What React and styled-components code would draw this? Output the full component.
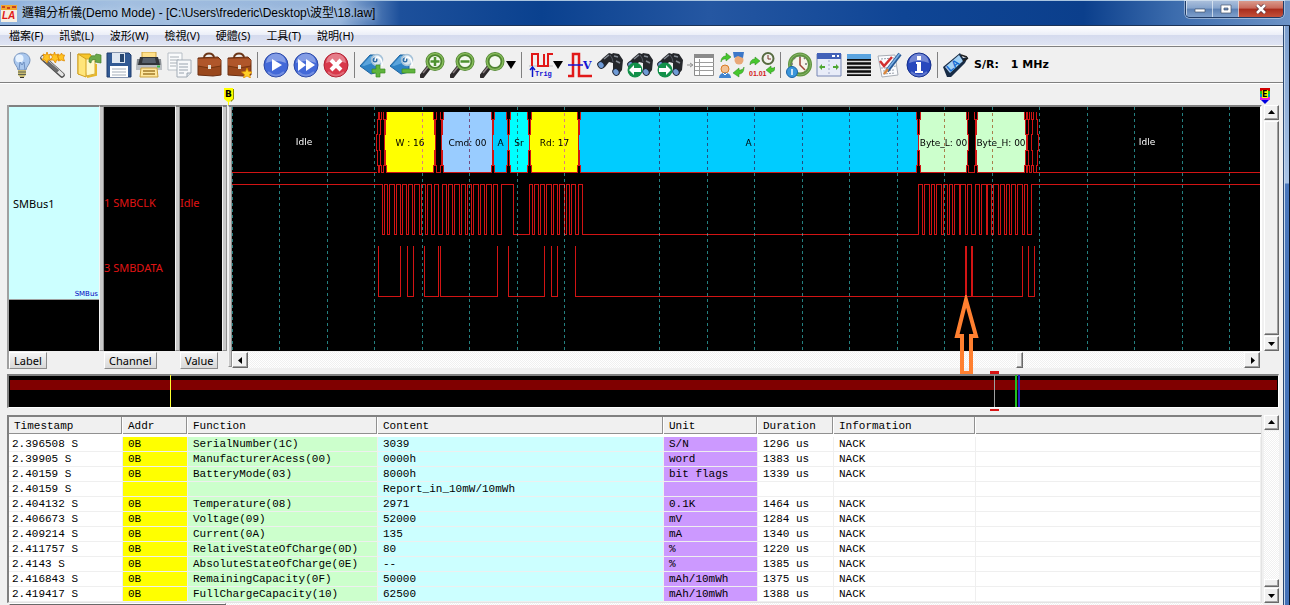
import React from "react";
import styled, { createGlobalStyle } from "styled-components";

const GlobalStyle = createGlobalStyle`
  * {
    box-sizing: border-box;
  }
  body {
    margin: 0;
    background: #f0f0f0;
    color: #000;
    font-family: "Noto Sans", "Noto Sans CJK TC", sans-serif;
    font-size: 11px;
  }
  button {
    font: inherit;
    color: inherit;
    padding: 0;
    border: 0;
    background: none;
  }
`;

/* ---------- window frame ---------- */

const Window = styled.div`
  display: flex;
  flex-direction: column;
  height: 100vh;
  min-height: 605px;
  overflow: hidden;
`;
const TitleBar = styled.header`
  display: flex;
  height: 26px;
  flex: none;
  padding: 0 6px 0 1px;
  border-top: 1px solid #a8c4e0;
  border-bottom: 1px solid #1c3357;
  background: linear-gradient(
    90deg,
    #8fb2dc 0,
    #a3bfe0 120px,
    #94b3da 340px,
    #1d509b 400px,
    #0a418f 42%,
    #2557a2 55%,
    #0f4595 70%,
    #0b3f8c 84%,
    #3c6cad 91%,
    #6d93c6 100%
  );
`;
const Title = styled.h1`
  flex: 1;
  margin: 0 0 0 5px;
  font-family: "Liberation Sans", "Noto Sans CJK TC", sans-serif;
  font-size: 12px;
  font-weight: 400;
  line-height: 24px;
  white-space: nowrap;
  text-shadow: 0 0 6px #d4e2f2;
`;
const AppLogo = styled.svg`
  width: 16px;
  height: 17px;
  margin-top: 4px;
`;
const WindowControls = styled.div`
  display: flex;
  width: 99px;
  height: 17px;
  border: 1px solid #1f3b66;
  border-top: 0;
  border-radius: 0 0 5px 5px;
  box-shadow: 0 0 0 1px rgba(255, 255, 255, 0.4);
  overflow: hidden;
`;
const WindowButton = styled.button`
  display: flex;
  align-items: center;
  justify-content: center;
  flex: ${(props) => (props.$close ? 45 : 26)};
  border-left: 1px solid rgba(235, 242, 250, 0.7);
  background: ${(props) =>
    props.$close
      ? "linear-gradient(#d99a8c 0, #c9695a 45%, #a82c1c 50%, #c4503a 100%)"
      : "linear-gradient(#a9bedb 0, #86a4cc 45%, #5b80b3 50%, #7fa0cc 100%)"};
`;
const Frame = styled.div`
  display: flex;
  flex: 1;
  min-height: 0;
`;
const FrameEdge = styled.div`
  flex: none;
  width: 7px;
  border-left: 1px solid #27456f;
  border-right: 1px solid #0a1526;
  box-shadow: inset 1px 0 #c5d6ea;
  background: linear-gradient(#7d9fce 0, #a9c4e6 157px, #4a78bd 158px, #4472b8 100%);
`;
const Main = styled.main`
  display: flex;
  flex-direction: column;
  flex: 1;
  min-width: 0;
`;

/* ---------- menu + toolbar ---------- */

const MenuBar = styled.nav`
  display: flex;
  flex: none;
  height: 20px;
  padding-left: 1px;
  border-bottom: 1px solid #f8f8f8;
  background: linear-gradient(#fff 0, #eceff8 45%, #d5dbee 50%, #dfe4f3 100%);
`;
const MenuItem = styled.button`
  padding: 0 8px;
  line-height: 17px;
`;
const ToolBar = styled.div`
  display: flex;
  align-items: center;
  flex: none;
  height: 37px;
  padding-left: 7px;
  border-top: 1px solid #808080;
  border-bottom: 1px solid #808080;
  box-shadow: 0 1px #fff;
`;
const ToolButton = styled.button`
  display: flex;
  align-items: center;
  justify-content: center;
  flex: none;
  width: ${(props) => props.$width || 30}px;
  height: 32px;
`;
const Separator = styled.span`
  flex: none;
  width: 1px;
  height: 26px;
  margin: 0 3px;
  background: #808080;
`;
const SampleRate = styled.output`
  display: flex;
  gap: 12px;
  margin-left: 3px;
  font: bold 11px "DejaVu Sans", Verdana, sans-serif;
`;
const Icon = styled.svg`
  flex: none;
  width: ${(props) => props.$width || 26}px;
  height: 26px;
`;
const DropArrow = styled.span`
  width: 0;
  height: 0;
  border: 5px solid transparent;
  border-top: 8px solid #000;
  border-bottom: 0;
`;

const Bulb = () => (
  <Icon viewBox="0 0 26 26">
    <path d="M13 1c-5 0-8 3.500-8 7.500 0 4 3.500 5.500 4 9.500h8c.5-4 4-5.500 4-9.500C21 4.500 18 1 13 1z" fill="#a9c7ee" stroke="#7894bd" />
    <ellipse cx="10.500" cy="6.500" rx="4" ry="4" fill="#e8f3ff" />
    <path d="M10 18l1-8 2 3 2-3 1 8" fill="none" stroke="#6e8fc0" />
    <path d="M9 18h8v5l-2 2h-4l-2-2z" fill="#c9bb72" />
    <path d="M9 20h8M9 22.500h8" stroke="#5f6452" />
    <path d="M11 25.500h4" stroke="#333" />
  </Icon>
);
const Wand = () => (
  <Icon viewBox="0 0 26 26">
    <path d="M4 6l19 17" stroke="#4d4d4d" strokeWidth="5.500" strokeLinecap="round" />
    <path d="M4 5.500l19 17" stroke="#e4e4e4" strokeWidth="3.500" strokeLinecap="round" />
    <path d="M8 10l11 9.500" stroke="#6b6b6b" strokeWidth="3.500" />
    <path d="M8 0l1 3 3-1-2 3 2 3-3 0-1 3-2-3-3 0 2-3-1-3 3 1zM15.500 0l1 3 3-1-1 3 2 3-3 0-1 3-2-3-3 0 2-3-2-3 3 1zM22.500 1l1 2 2 0-1 3 1 3-3-1-3 1 0-3-1-3 3 0z" fill="#ffc423" stroke="#e08a00" strokeWidth=".8" />
  </Icon>
);
const OpenFolder = () => (
  <Icon viewBox="0 0 26 26">
    <path d="M2 2h12l2 3v17H2z" fill="#f6c62c" stroke="#c99612" />
    <path d="M8 7h11v15l-9 2z" fill="#fff8c8" stroke="#d3ab38" />
    <path d="M2 2l8 5v18l-8-3z" fill="#ffe57a" stroke="#d3a01c" />
    <path d="M13 10c0-6 3-7 6-6l1-2 5 1v8l-6-1 1-2c-3-1-5 0-5 3z" fill="#6aa84a" stroke="#457f2e" strokeWidth=".7" />
    <path d="M20 12v11l-9 2" fill="none" stroke="#e5b62b" strokeWidth="2" />
  </Icon>
);
const Save = () => (
  <Icon viewBox="0 0 26 26">
    <path d="M1 1h22l2 2v22H1z" fill="#325a94" stroke="#1e3d6e" />
    <path d="M6 1h13v10H6z" fill="#dfe7f1" />
    <path d="M14 2h4v8h-4z" fill="#27466f" />
    <path d="M4 14h18v11H4z" fill="#fff" />
    <path d="M6 17h14M6 20h14M6 23h14" stroke="#a3adb9" />
  </Icon>
);
const Printer = () => (
  <Icon viewBox="0 0 26 26">
    <path d="M6 0h14v7H6z" fill="#ffe08a" stroke="#c99f3c" />
    <path d="M1 7h24l1 11H0z" fill="#888d92" />
    <path d="M4 5h18l2 8H2z" fill="#323539" />
    <path d="M7 6h12l1 5H6z" fill="#57606b" />
    <path d="M0 13h26v5H0z" fill="#babec2" />
    <path d="M5 16h16l1 9H4z" fill="#ffe79d" stroke="#c99f3c" />
    <path d="M7 19h12M7 22h12" stroke="#a27b2a" strokeWidth="1.500" />
    <path d="M21 14.500h3" stroke="#3ab54a" strokeWidth="2" />
  </Icon>
);
const CopyPages = () => (
  <Icon viewBox="0 0 26 26">
    <path d="M2 1h14v17H2z" fill="#fafbfc" stroke="#b7bec5" />
    <path d="M4 5h9M4 8h9M4 11h9M4 14h6" stroke="#a9b0b7" />
    <path d="M11 8h14v13l-4 4H11z" fill="#f7f8fa" stroke="#a2abb5" />
    <path d="M21 25v-4h4" fill="#d8dfe6" stroke="#9da7b1" />
    <path d="M13 12h9M13 15h9M13 18h9M13 21h5" stroke="#99a3ae" />
  </Icon>
);
const Briefcase = ({ star }) => (
  <Icon viewBox="0 0 26 26">
    <path d="M8 6c0-6 10-6 10 0" fill="none" stroke="#6b3516" strokeWidth="2" />
    <path d="M2 6l20-1 3 3v15l-8 1-15-1z" fill="#9a481d" stroke="#6c2e10" />
    <path d="M2 7h20l3 1-1 6-11 2-11-2z" fill="#b0562a" />
    <path d="M2 14l11 2 12-2" fill="none" stroke="#76340f" />
    <path d="M12 13h3v4h-3z" fill="#e3ded3" />
    {star && <path d="M21 16l1.500 3.500 4 .5-3 2.500 1 3.500-3.500-2-3.500 2 1-3.500-3-2.500 4-.5z" fill="#ffcf28" stroke="#e38d00" strokeWidth=".7" />}
  </Icon>
);
const RoundIcon = ({ color, dark, children }) => (
  <Icon viewBox="0 0 26 26">
    <circle cx="13" cy="13" r="12" fill={color} stroke={dark} />
    <path d="M3 11a10 9.500 0 0 1 20 0q-10-4-20 0z" fill="#fff" opacity=".35" />
    <path d="M5 20q8 7 16 0" fill="none" stroke="#fff" strokeWidth="2" opacity=".25" />
    {children}
  </Icon>
);
const Bookmark = ({ add }) => (
  <Icon viewBox="0 0 26 26">
    <path d="M0 14L10 3l9 0v17l-8 2z" fill="#2e82c4" stroke="#1f64a0" />
    <path d="M2 13.500L10.500 4H18v5L4 14z" fill="#5aa4dc" />
    <circle cx="17" cy="8" r="5.500" fill="#dbe7f0" stroke="#a5c2d9" strokeWidth="1.500" />
    <circle cx="15" cy="8" r="2.500" fill="#2e6ea8" />
    <path d="M15 9c0-7 8-4 7 5" fill="none" stroke="#fff" strokeWidth="1.500" />
    <path d={add ? "M16 13h4v4h5v4h-5v4h-4v-4h-4v-4h4z" : "M12 17h13v4H12z"} fill="#5fb43c" stroke="#3c8c22" strokeWidth=".7" />
  </Icon>
);
const Magnifier = ({ sign }) => (
  <Icon viewBox="0 0 26 26">
    <path d="M9 15l-7 9" stroke="#2e2a2b" strokeWidth="5" strokeLinecap="round" />
    <path d="M8 15l-5 6" stroke="#8d8284" strokeWidth="1.500" />
    <circle cx="15" cy="9.500" r="7.500" fill="#f3f8ee" stroke="#4f8530" strokeWidth="4" />
    <circle cx="15" cy="9.500" r="8" fill="none" stroke="#86bb5a" strokeWidth="1.500" />
    {sign && <path d={sign === "+" ? "M10.500 9.500h9M15 5v9" : "M10.500 9.500h9"} stroke="#4e9230" strokeWidth="2.500" />}
  </Icon>
);
const Trigger = () => (
  <Icon viewBox="0 0 26 26">
    <path d="M2 14h24" stroke="#bdbdbd" />
    <path d="M5 14V2h6v12h6V2M17 14h4V2h5" fill="none" stroke="#e11919" strokeWidth="2" />
    <path d="M5.500 25V15M3 18l2.500-3L8 18" fill="none" stroke="#0a14c8" strokeWidth="1.500" />
    <text x="8" y="24" fontFamily="Liberation Mono, monospace" fontWeight="700" fontSize="7" fill="#1414d2">Trig</text>
  </Icon>
);
const Voltage = () => (
  <Icon viewBox="0 0 26 26">
    <path d="M1 24h5V2h6v22h13" fill="none" stroke="#e11919" strokeWidth="2.500" />
    <path d="M1 13h15" stroke="#1414d2" strokeWidth="1.500" />
    <text x="16" y="17" fontFamily="DejaVu Serif, serif" fontWeight="700" fontSize="11" fill="#1414d2">V</text>
  </Icon>
);
const Binoculars = ({ arrow }) => (
  <Icon viewBox="0 0 26 26">
    <path d="M6 6l6-5 3 1 1-1 6 1 4 6-1 10-4 5-5-3V11l-4-1-4 5-3 1-5-4z" fill="#25272b" />
    <path d="M7 7l5-4M17 4l4 1M19 9l4 2" stroke="#868c95" strokeWidth="1.500" />
    <path d="M13 3l2 3 1 4" stroke="#555a63" fill="none" />
    <ellipse cx="4" cy="13" rx="3" ry="3.500" transform="rotate(-35 4 13)" fill="#6f9bd6" stroke="#1e2634" />
    <ellipse cx="19" cy="20" rx="3" ry="3.500" transform="rotate(-35 19 20)" fill="#6f9bd6" stroke="#1e2634" />
    {arrow && <circle cx="8" cy="18" r="7.500" fill="#12914a" />}
    {arrow === "left" && <path d="M2 18l5-5v3h7v4H7v3z" fill="#fff" />}
    {arrow === "right" && <path d="M14 18l-5-5v3H2v4h7v3z" fill="#fff" />}
  </Icon>
);
const ListTable = () => (
  <Icon $width={28} viewBox="0 0 28 26">
    <path d="M0 13h5M3 11l3 2-3 2" fill="none" stroke="#8f8f8f" />
    <path d="M7.500 2.500h19v21h-19z" fill="#fff" stroke="#8b8b8b" />
    <path d="M7 2h20v4H7z" fill="#8b8b8b" />
    <path d="M8 10.500h19M8 14.500h19M8 18.500h19M12.500 7v16" stroke="#9d9d9d" />
  </Icon>
);
const Users = () => (
  <Icon viewBox="0 0 26 26">
    <circle cx="20" cy="8" r="4.500" fill="#e9a878" />
    <path d="M14 0h11l-1 6-5-2-4 2z" fill="#3c77c8" />
    <circle cx="6" cy="17" r="4" fill="#f2c294" stroke="#d97c24" />
    <path d="M0 26c0-7 12-7 12 0z" fill="#3f83cf" />
    <path d="M4 21l2 2 2-2" fill="none" stroke="#fff" />
    <path d="M2 10c0-5 3-6 5-6V1l5 4-5 4V7c-2 0-4 0-5 3zM25 15c0 6-3 7-5 7v3l-6-4 6-5v2c2 0 4 0 5-3z" fill="#47c72e" stroke="#2b871a" strokeWidth=".5" />
  </Icon>
);
const TimeData = () => (
  <Icon viewBox="0 0 26 26">
    <path d="M1 13c0-5 3-6 5-6V5l5 4-5 4v-2c-2 0-4 0-5 2zM26 15c0 4-2 5-4 5v2l-5-4 5-4v2c2 0 3 0 4-1z" fill="#47c72e" stroke="#2b871a" strokeWidth=".5" />
    <circle cx="19" cy="6.500" r="5.500" fill="#f2f2ee" stroke="#576b40" strokeWidth="2" />
    <path d="M19 3v4h3" fill="none" stroke="#7b3327" />
    <text x="0" y="24" fontFamily="Liberation Sans, sans-serif" fontWeight="700" fontSize="7" fill="#d31919">01.01</text>
  </Icon>
);
const Clock = () => (
  <Icon viewBox="0 0 26 26">
    <circle cx="14" cy="12.500" r="10" fill="#f7f3ea" stroke="#5f9440" strokeWidth="4" />
    <circle cx="14" cy="12.500" r="10.500" fill="none" stroke="#86b566" />
    <path d="M14 5v8l5 5" fill="none" stroke="#9c4335" strokeWidth="1.500" />
    <path d="M14 4v2M21 12h-2M5 12h2M19 6l-1 1M8 6l1 1" stroke="#777" strokeWidth="1.500" />
    <circle cx="6" cy="20" r="5.500" fill="#3a96db" stroke="#1a64a8" />
    <path d="M6 17v6" stroke="#fff" strokeWidth="1.500" />
  </Icon>
);
const WidthWindow = () => (
  <Icon viewBox="0 0 26 26">
    <path d="M1 2h24v22H1z" fill="#e8ecf8" stroke="#7686b4" />
    <path d="M1 1h24v6H1z" fill="#4262b8" />
    <path d="M16 4h3M21 4h2" stroke="#fff" strokeWidth="2" />
    <path d="M13 8v15" stroke="#a0a9c8" strokeDasharray="2 2" />
    <path d="M3 15l3-3v2h3v2H6v2zM23 15l-3-3v2h-3v2h3v2z" fill="#4fa733" />
  </Icon>
);
const Stripes = () => (
  <Icon viewBox="0 0 26 26">
    <path d="M1 2h24v22H1z" fill="#0d0d0d" />
    <path d="M1 2h24v5H1z" fill="#5ba4df" />
    <path d="M1 9.500h24M1 13.500h24M1 17.500h24M1 21.500h24" stroke="#dcdcdc" strokeWidth="1.500" />
  </Icon>
);
const Checklist = () => (
  <Icon viewBox="0 0 26 26">
    <path d="M2 4l17-1 3 20-16 2z" fill="#fbfcfe" stroke="#a7adb5" />
    <path d="M5 7l13-1M5 16l4 0M7 19l11-1M7 22l12-1M9 16l11-2" stroke="#99a0aa" strokeDasharray="2 1" />
    <path d="M4 9l4 5 8-9" fill="none" stroke="#d23030" strokeWidth="2.500" />
    <path d="M24 2L11 19" stroke="#285b98" strokeWidth="4" />
    <path d="M23.500 2L11 18" stroke="#7db2e6" strokeWidth="1.500" />
    <path d="M12 17l-4 5" stroke="#d9853a" strokeWidth="2.500" />
  </Icon>
);
const DeviceIcon = () => (
  <Icon viewBox="0 0 26 26">
    <path d="M0 15L17 1l3 5 5-1-3 6-14 14-4 0z" fill="#182c46" />
    <path d="M2 15L16 3l4 6L7 21z" fill="#a4d2f6" />
    <text x="4" y="20" transform="rotate(-40 6 16)" fontFamily="Liberation Sans, sans-serif" fontWeight="700" fontSize="10" fill="#1268d0">LA</text>
    <path d="M18 3l6 2M20 9l5-3" stroke="#222" strokeWidth="1.500" />
  </Icon>
);

/* ---------- scroll bars ---------- */

const ScrollButton = styled.button`
  display: flex;
  align-items: center;
  justify-content: center;
  flex: none;
  width: ${(props) => props.$size || 15}px;
  height: ${(props) => props.$size || 15}px;
  background: #f0f0f0;
  border: 1px solid;
  border-color: #fff #696969 #696969 #fff;
  box-shadow: inset -1px -1px #a0a0a0;
`;
const glyphs = {
  up: "M0 5l3.500-4L7 5z",
  down: "M0 2h7L3.500 6z",
  left: "M5 0v7L1 3.500z",
  right: "M2 0l4 3.500L2 7z",
};
const Arrow = ({ dir, ...rest }) => (
  <ScrollButton aria-label={`Scroll ${dir}`} {...rest}>
    <svg width="7" height="7">
      <path d={glyphs[dir]} />
    </svg>
  </ScrollButton>
);
const Track = styled.div`
  display: flex;
  flex: 1;
  min-height: 0;
  flex-direction: ${(props) => (props.$vertical ? "column" : "row")};
  justify-content: flex-end;
  background: repeating-conic-gradient(#fff 0 25%, #f0f0f0 0 50%) 0 0 / 2px 2px;
`;
const Thumb = styled.div`
  flex: ${(props) => (props.$fill ? 1 : "none")};
  width: ${(props) => (props.$width ? `${props.$width}px` : "auto")};
  height: ${(props) => (props.$height ? `${props.$height}px` : "auto")};
  margin-right: ${(props) => props.$after || 0}px;
  background: #f0f0f0;
  border: 1px solid;
  border-color: #fff #696969 #696969 #fff;
  box-shadow: inset -1px -1px #a0a0a0;
`;
const VScroll = styled.div`
  display: flex;
  flex-direction: column;
  flex: none;
  gap: 1px;
  width: 15px;
  margin-left: 2px;
  padding-bottom: ${(props) => props.$below || 0}px;
`;
const HScroll = styled.div`
  display: flex;
  height: 17px;
  padding: 1px 2px 0 0;
`;

/* ---------- analyzer ---------- */

const MarkerStrip = styled.div`
  display: flex;
  justify-content: space-between;
  flex: none;
  height: 22px;
  padding: 5px 12px 0 224px;
`;
const Analyzer = styled.section`
  position: relative;
  display: flex;
  flex: none;
  margin: 0 4px 5px 7px;
`;
const Pane = styled.div`
  display: flex;
  flex-direction: column;
  align-items: flex-start;
  flex: none;
  width: ${(props) => props.$width}px;
  border-left: ${(props) => (props.$first ? "2px solid #a0a0a0" : 0)};
`;
const PaneBody = styled.div`
  display: flex;
  flex-direction: column;
  align-self: stretch;
  height: 246px;
  border-top: 2px solid #808080;
  background: #000;
  color: #e01414;
`;
const BusLabel = styled.div`
  display: flex;
  flex-direction: column;
  height: 193px;
  padding-left: 4px;
  background: #ccffff;
  color: #000;
  border-bottom: 1px solid #a0a0a0;
`;
const BusName = styled.span`
  margin: auto 0;
`;
const BusKind = styled.small`
  align-self: flex-end;
  margin: -9px 1px 0 0;
  font: 7px/9px "DejaVu Sans", Verdana, sans-serif;
  color: #0000c0;
`;
const ChannelRow = styled.div`
  height: 65px;
  line-height: 64px;
  white-space: nowrap;
`;
const ChannelList = styled.div`
  padding-top: 64px;
`;
const PaneButton = styled.button`
  height: 17px;
  margin-top: 1px;
  padding: 0 4px;
  line-height: 15px;
  background: linear-gradient(#f4f4f4, #d8d8d8);
  border: 1px solid;
  border-color: #fff #8c8c8c #8c8c8c #fff;
`;
const Splitter = styled.div`
  flex: none;
  width: ${(props) => props.$width || 5}px;
  margin: 0 0 ${(props) => (props.$long ? 2 : 18)}px ${(props) => props.$gap || 0}px;
  background: #c8c8c8;
  border: 1px solid;
  border-color: #808080 #909090 #909090 #f4f4f4;
  border-top-width: 2px;
`;
const CanvasColumn = styled.div`
  flex: 1;
  min-width: 0;
`;
const Canvas = styled.div`
  height: 246px;
  border-top: 2px solid #808080;
  border-right: 2px solid #fff;
  background: #000;
`;
const Plot = styled.svg`
  display: block;
  width: 100%;
  height: 244px;
  isolation: isolate;
  shape-rendering: crispEdges;
`;
const Grid = styled.g`
  stroke: #248080;
  stroke-dasharray: 3 3;
  mix-blend-mode: difference;
`;
const Signal = styled.path`
  fill: none;
  stroke: #d21414;
`;
const FrameText = styled.text`
  font-family: "DejaVu Sans", Verdana, sans-serif;
  font-size: 9px;
  text-anchor: middle;
  shape-rendering: auto;
`;
const Pointer = styled.svg`
  position: absolute;
  top: 190px;
  right: 299px;
  width: 28px;
  height: 84px;
`;

const PLOT_X = 232;
const PLOT_Y = 107;
const PLOT_END = 4000;

const Frames = [
  { from: 384, to: 435, fill: "#ffff00", text: "W : 16" },
  { from: 441, to: 493, fill: "#99ccff", text: "Cmd: 00" },
  { from: 492, to: 508, fill: "#00ccff", text: "A" },
  { from: 508, to: 529, fill: "#00ffff", text: "Sr" },
  { from: 529, to: 579, fill: "#ffff00", text: "Rd: 17" },
  { from: 578, to: 918, fill: "#00ccff", text: "A" },
  { from: 918, to: 968, fill: "#ccffcc", text: "Byte_L: 00" },
  { from: 975, to: 1026, fill: "#ccffcc", text: "Byte_H: 00" },
];

const Gaps = [
  [376, 381],
  [379, 385],
  [434, 442],
  [966, 976],
  [1024, 1029],
  [1027, 1033],
  [1031, 1038],
];

// clock toggles, starting from the high level
const ClockEdges = [
  382, 384, 387, 389, 394, 396, 400, 402, 406, 408, 412, 414, 419, 421, 425, 427,
  431, 434, 438, 442, 446, 448, 452, 454, 459, 461, 465, 467, 471, 473, 478, 480,
  484, 486, 491, 493, 497, 501, 513, 529, 532, 534, 538, 540, 544, 546, 551, 553,
  557, 559, 564, 566, 569, 571, 575, 578, 582, 918, 922, 924, 929, 931, 934, 936,
  941, 943, 947, 949, 952, 954, 959, 960, 965, 967, 971, 975, 979, 981, 986, 987,
  991, 993, 998, 1000, 1004, 1006, 1009, 1011, 1015, 1017, 1022, 1024, 1027, 1031,
];

const DataLows = [
  [378, 400], [407, 413], [424, 438], [440, 497], [508, 544], [551, 557],
  [575, 965], [966, 971], [972, 1022], [1028, 1034],
];

const steps = (from, to) => {
  const l = [from + 2, from + 1, from, from + 1, from + 2];
  const ys = [111, 119, 134, 150, 165, 172];
  const left = l.map((x, i) => `${x},${ys[i]} ${x},${ys[i + 1]}`);
  const right = l.map((x, i) => `${to - (x - from)},${ys[i]} ${to - (x - from)},${ys[i + 1]}`);
  return { left: left.join(" "), right: right.join(" ") };
};

const BusFrame = ({ from, to, fill, text }) => {
  const { left, right } = steps(from, to);
  return (
    <g transform="translate(.5 .5)">
      <polygon
        points={`${left} ${right.split(" ").reverse().join(" ")}`}
        fill={fill || "#000"}
      />
      <polyline points={left} fill="none" stroke="#d21414" />
      <polyline points={right} fill="none" stroke="#d21414" />
      <line x1={from + 2} x2={to - 2} y1="172" y2="172" stroke="#d21414" />
      {text && (
        <FrameText x={(from + to) / 2} y="145">
          {text}
        </FrameText>
      )}
    </g>
  );
};

const clockPath = () => {
  let level = 184.5;
  let d = `M${PLOT_X} ${level}`;
  ClockEdges.forEach((x) => {
    level = level === 184.5 ? 234.5 : 184.5;
    d += `H${x + 0.5}V${level}`;
  });
  return `${d}H${PLOT_END}`;
};
const dataPath = () =>
  DataLows.map(([a, b]) => `M${a + 0.5} 246V296.5H${b + 0.5}V246`).join("");

// the division at index 8 is left undrawn
const gridLines = Array.from({ length: 80 }, (_, i) => PLOT_X + Math.floor(i * 47.5) + 0.5).filter(
  (_, i) => i !== 8
);

const Waveform = () => (
  <Plot>
    <g transform={`translate(${-PLOT_X} ${-PLOT_Y})`}>
      <Signal d={`M${PLOT_X} 172.5H377M1037 172.5H${PLOT_END}`} />
      {Gaps.map(([from, to]) => (
        <BusFrame key={from} from={from} to={to} />
      ))}
      {Frames.map((frame) => (
        <BusFrame key={frame.from} {...frame} />
      ))}
      <Signal d={clockPath()} />
      <Signal d={dataPath()} />
      <FrameText x="304" y="145" fill="#fff">Idle</FrameText>
      <FrameText x="1147" y="145" fill="#fff">Idle</FrameText>
      <Grid>
        {gridLines.map((x) => (
          <line key={x} x1={x} x2={x} y1={PLOT_Y} y2="351" />
        ))}
      </Grid>
    </g>
  </Plot>
);

/* ---------- overview ---------- */

const Overview = styled.section`
  position: relative;
  flex: none;
  height: 34px;
  margin: 0 4px 7px 7px;
  padding-top: 4px;
  background: #000;
  border: 1px solid;
  border-width: 2px 1px 1px 2px;
  border-color: #808080 #fff #fff #808080;
`;
const CaptureBar = styled.div`
  height: 10px;
  margin: 0 1px;
  background: #800000;
`;
const Cursor = styled.i`
  position: absolute;
  top: -1px;
  bottom: 0;
  left: ${(props) => props.$at}%;
  width: ${(props) => props.$width || 1}px;
  background: ${(props) => props.$color};

  &::before,
  &::after {
    content: "";
    position: absolute;
    left: -4px;
    width: 9px;
    height: 3px;
    background: #d81414;
    display: ${(props) => (props.$caps ? "block" : "none")};
  }
  &::before {
    top: -4px;
  }
  &::after {
    bottom: -4px;
    height: 2px;
  }
`;

/* ---------- decoded log ---------- */

const Log = styled.section`
  display: flex;
  flex: 1;
  min-height: 0;
  margin: 0 4px 0 7px;
`;
const LogBody = styled.div`
  flex: 1;
  min-width: 0;
  background: #fff;
  border: 1px solid;
  border-width: 2px 1px 1px 2px;
  border-color: #808080 #e3e3e3 #e3e3e3 #808080;
`;
const LogTable = styled.table`
  width: 100%;
  table-layout: fixed;
  border-collapse: separate;
  border-spacing: 0;
  font: 11px/14px "Liberation Mono", "Courier New", monospace;
`;
const HeadCell = styled.th`
  padding: 0 0 3px;
  text-align: left;
  font-weight: 400;
  white-space: nowrap;
  width: ${(props) => (props.$width ? `${props.$width}px` : "auto")};
`;
const HeadLabel = styled.span`
  display: block;
  height: 17px;
  margin-right: ${(props) => (props.$last ? 0 : 1)}px;
  padding-left: 5px;
  line-height: 19px;
  background: #f0f0f0;
  border-bottom: 1px solid #909090;
  border-right: ${(props) => (props.$last ? 0 : 1)}px solid #909090;
`;
const Cell = styled.td`
  height: 15px;
  padding: 0 0 0 5px;
  white-space: nowrap;
  background: ${(props) => props.$fill || "#fff"};
  border-bottom: 1px solid #efefef;
  border-right: 1px solid #efefef;

  &:first-child {
    padding-left: 3px;
  }
`;

const Columns = [
  { name: "Timestamp", width: 114 },
  { name: "Addr", width: 65, fill: "#ffff00" },
  { name: "Function", width: 190, fill: "#ccffcc" },
  { name: "Content", width: 286, fill: "#ccffff" },
  { name: "Unit", width: 94, fill: "#cc99ff" },
  { name: "Duration", width: 76 },
  { name: "Information", width: 142 },
  { name: "" },
];

const Rows = [
  ["2.396508 S", "0B", "SerialNumber(1C)", "3039", "S/N", "1296 us", "NACK"],
  ["2.39905 S", "0B", "ManufacturerAcess(00)", "0000h", "word", "1383 us", "NACK"],
  ["2.40159 S", "0B", "BatteryMode(03)", "8000h", "bit flags", "1339 us", "NACK"],
  ["2.40159 S", "", "", "Report_in_10mW/10mWh", "", "", ""],
  ["2.404132 S", "0B", "Temperature(08)", "2971", "0.1K", "1464 us", "NACK"],
  ["2.406673 S", "0B", "Voltage(09)", "52000", "mV", "1284 us", "NACK"],
  ["2.409214 S", "0B", "Current(0A)", "135", "mA", "1340 us", "NACK"],
  ["2.411757 S", "0B", "RelativeStateOfCharge(0D)", "80", "%", "1220 us", "NACK"],
  ["2.4143 S", "0B", "AbsoluteStateOfCharge(0E)", "--", "%", "1385 us", "NACK"],
  ["2.416843 S", "0B", "RemainingCapacity(0F)", "50000", "mAh/10mWh", "1375 us", "NACK"],
  ["2.419417 S", "0B", "FullChargeCapacity(10)", "62500", "mAh/10mWh", "1388 us", "NACK"],
];

const DecodedLog = () => (
  <Log>
    <LogBody>
      <LogTable>
        <thead>
          <tr>
            {Columns.map(({ name, width }) => (
              <HeadCell key={name} scope="col" $width={width}>
                <HeadLabel $last={!width}>{name}</HeadLabel>
              </HeadCell>
            ))}
          </tr>
        </thead>
        <tbody>
          {Rows.map((row, index) => (
            <tr key={index}>
              {Columns.map(({ name, fill }, i) => (
                <Cell key={name} $fill={fill}>
                  {row[i]}
                </Cell>
              ))}
            </tr>
          ))}
        </tbody>
      </LogTable>
    </LogBody>
    <VScroll>
      <Arrow dir="up" />
      <Track $vertical>
        <Thumb $height={8} />
      </Track>
      <Arrow dir="down" />
    </VScroll>
  </Log>
);
const BottomScroll = styled.div`
  display: flex;
  flex: none;
  height: 2px;
  margin: 0 20px 0 9px;
`;

const Menus = ["檔案(F)", "訊號(L)", "波形(W)", "檢視(V)", "硬體(S)", "工具(T)", "說明(H)"];

const ToolGroups = [
  [["Setup", <Bulb />], ["Wizard", <Wand />]],
  [
    ["Open", <OpenFolder />],
    ["Save", <Save />],
    ["Print", <Printer />],
    ["Copy", <CopyPages />],
    ["Project", <Briefcase />],
    ["New project", <Briefcase star />],
  ],
  [
    ["Run", <RoundIcon color="#4369d8" dark="#2c49a5"><path d="M9 7l10 6-10 6z" fill="#fff" /></RoundIcon>],
    ["Repeat", <RoundIcon color="#4369d8" dark="#2c49a5"><path d="M5 7l8 6-8 6zM13 7l9 6-9 6z" fill="#fff" /></RoundIcon>],
    ["Stop", <RoundIcon color="#d8384a" dark="#b02233"><path d="M8 8l10 10M18 8L8 18" stroke="#fff" strokeWidth="4" /></RoundIcon>],
  ],
  [
    ["Add bookmark", <Bookmark add />],
    ["Remove bookmark", <Bookmark />],
    ["Zoom in", <Magnifier sign="+" />],
    ["Zoom out", <Magnifier sign="-" />],
    ["Zoom", <><Magnifier /><DropArrow /></>, 40],
  ],
  [
    ["Trigger", <><Trigger /><DropArrow /></>, 40],
    ["Threshold", <Voltage />],
    ["Find", <Binoculars />],
    ["Find previous", <Binoculars arrow="left" />],
    ["Find next", <Binoculars arrow="right" />],
    ["List", <ListTable />, 32],
    ["Channels", <Users />],
    ["Data", <TimeData />],
  ],
  [
    ["Timing", <Clock />],
    ["Fit width", <WidthWindow />],
    ["Rows", <Stripes />],
    ["Report", <Checklist />],
    [
      "About",
      <RoundIcon color="#2848bd" dark="#152f8b">
        <path d="M11 4h4v4h-4zM10 10h5v9h2v2H9v-2h2v-7h-1z" fill="#fff" />
      </RoundIcon>,
    ],
  ],
];

const App = () => (
  <Window>
    <GlobalStyle />
    <TitleBar>
      <AppLogo viewBox="0 0 16 17">
        <path d="M0 0h16v17H0z" fill="#f6efe2" />
        <path d="M0 0h16v5H0z" fill="#f0a830" />
        <path d="M1 1h3v2H1zM6 2h3v2H6zM11 1h4v2h-4z" fill="#c8441e" />
        <text x="1" y="14" fontFamily="Liberation Sans, sans-serif" fontWeight="700" fontStyle="italic" fontSize="10" fill="#e01818">LA</text>
      </AppLogo>
      <Title>邏輯分析儀(Demo Mode) - [C:\Users\frederic\Desktop\波型\18.law]</Title>
      <WindowControls>
        <WindowButton aria-label="Minimize">
          <svg width="12" height="10"><path d="M1 5h10v3H1z" fill="#fff" stroke="#45546c" strokeWidth=".7" /></svg>
        </WindowButton>
        <WindowButton aria-label="Maximize">
          <svg width="12" height="10"><path d="M1 1h10v8H1zM4 4v2h4V4z" fillRule="evenodd" fill="#fff" stroke="#45546c" strokeWidth=".7" /></svg>
        </WindowButton>
        <WindowButton $close aria-label="Close">
          <svg width="12" height="10">
            <path d="M2 1l8 8M10 1L2 9" stroke="#5a3038" strokeWidth="4" />
            <path d="M2 1l8 8M10 1L2 9" stroke="#fff" strokeWidth="2.500" />
          </svg>
        </WindowButton>
      </WindowControls>
    </TitleBar>
    <Frame>
      <Main>
        <MenuBar>
          {Menus.map((menu) => (
            <MenuItem key={menu}>{menu}</MenuItem>
          ))}
        </MenuBar>
        <ToolBar>
          {ToolGroups.map((group, index) => (
            <React.Fragment key={index}>
              {group.map(([name, icon, width]) => (
                <ToolButton key={name} aria-label={name} $width={width}>
                  {icon}
                </ToolButton>
              ))}
              <Separator />
            </React.Fragment>
          ))}
          <ToolButton aria-label="Device">
            <DeviceIcon />
          </ToolButton>
          <SampleRate>
            <span>S/R:</span>
            <span>1 MHz</span>
          </SampleRate>
        </ToolBar>

        <MarkerStrip>
          <svg width="11" height="17">
            <path d="M2 1h8v10l-3 3z" fill="#8c8c00" />
            <path d="M0 0h9v11l-4 3v3H4v-3l-4-3z" fill="#ffff00" />
            <text x="1" y="9" fontFamily="DejaVu Sans, sans-serif" fontWeight="700" fontSize="9">B</text>
          </svg>
          <svg width="11" height="17">
            <path d="M0 0h10v3H0z" fill="#d00000" />
            <path d="M0 3h10v3H0z" fill="#20c020" />
            <path d="M0 6h10v3H0z" fill="#00a0c0" />
            <path d="M0 9h10v3H0z" fill="#e020e0" />
            <path d="M1 12h8l-4 4z" fill="#0000e0" />
            <path d="M2 2h6v8H2z" fill="#ffff00" />
            <text x="2" y="9" fontFamily="DejaVu Sans, sans-serif" fontWeight="700" fontSize="8">E</text>
          </svg>
        </MarkerStrip>

        <Analyzer>
          <Pane $width={92} $first>
            <PaneBody>
              <BusLabel>
                <BusName>SMBus1</BusName>
                <BusKind>SMBus</BusKind>
              </BusLabel>
            </PaneBody>
            <PaneButton>Label</PaneButton>
          </Pane>
          <Splitter />
          <Pane $width={71}>
            <PaneBody>
              <ChannelList>
                <ChannelRow>1 SMBCLK</ChannelRow>
                <ChannelRow>3 SMBDATA</ChannelRow>
              </ChannelList>
            </PaneBody>
            <PaneButton>Channel</PaneButton>
          </Pane>
          <Splitter />
          <Pane $width={42}>
            <PaneBody>
              <ChannelList>
                <ChannelRow>Idle</ChannelRow>
              </ChannelList>
            </PaneBody>
            <PaneButton>Value</PaneButton>
          </Pane>
          <Splitter />
          <Splitter $width={4} $gap={1} $long />
          <CanvasColumn>
            <Canvas>
              <Waveform />
            </Canvas>
            <HScroll>
              <Arrow dir="left" $size={16} />
              <Track>
                <Thumb $width={7} $after={221} />
              </Track>
              <Arrow dir="right" $size={16} />
            </HScroll>
          </CanvasColumn>
          <VScroll $below={18}>
            <Arrow dir="up" />
            <Thumb $fill />
            <Arrow dir="down" />
          </VScroll>
          <Pointer viewBox="0 0 28 84">
            <path d="M14 5L5 41h5v37h9V41h5z" fill="none" stroke="#ff8030" strokeWidth="4" />
          </Pointer>
        </Analyzer>

        <Overview>
          <CaptureBar />
          <Cursor $at={12.7} $color="#ffff30" />
          <Cursor $at={77.6} $color="#a0a0a0" $caps />
          <Cursor $at={79.3} $width={2} $color="#20c020" />
          <Cursor $at={79.5} $width={2} $color="#2020c0" />
        </Overview>

        <DecodedLog />
        <BottomScroll>
          <Thumb $width={217} />
          <Track />
        </BottomScroll>
      </Main>
      <FrameEdge />
    </Frame>
  </Window>
);

export default App;
